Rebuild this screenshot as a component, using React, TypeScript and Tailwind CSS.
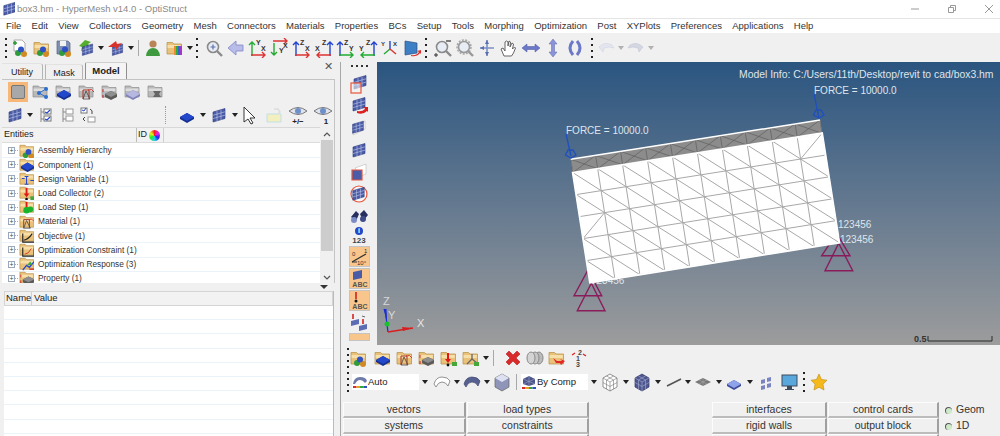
import type { ReactNode } from "react";

const FONT = "font-['Liberation_Sans',Arial,sans-serif]";

function Ic({ children, w = 20, h = 20 }: { children: ReactNode; w?: number; h?: number }) {
  return (
    <svg viewBox={`0 0 ${w} ${h}`} width={w} height={h} className="shrink-0 block">
      {children}
    </svg>
  );
}

function Caret() {
  return (
    <svg viewBox="0 0 6 4" width="6" height="4" className="shrink-0 block">
      <path d="M0 0h6L3 4z" fill="#222" />
    </svg>
  );
}

function Grip({ n = 4 }: { n?: number }) {
  return (
    <div className="flex flex-col gap-[4px] shrink-0 mx-[1px]">
      {Array.from({ length: n }).map((_, i) => (
        <span key={i} className="block w-[2px] h-[2px] bg-[#222]" />
      ))}
    </div>
  );
}

function Sep() {
  return <div className="w-px h-[16px] bg-[#a8a8a8] mx-[2px] shrink-0" />;
}

// --- drawing parts ---
const Folder = () => (
  <>
    <path d="M2 4.5h5.5l1.5 1.5h7.5v10H2z" fill="#e9c178" stroke="#b58d45" strokeWidth=".7" />
    <path d="M2.6 7h13.2v3H2.6z" fill="#f6dfa9" />
  </>
);
const GreyFolder = () => (
  <>
    <path d="M2 4h5.5L9 5.5h7V15H2z" fill="#b9b9b9" stroke="#8e8e8e" strokeWidth=".7" />
    <path d="M2.6 6.5h12.8v2.5H2.6z" fill="#dcdcdc" />
  </>
);
const Flag = () => (
  <g>
    <path d="M4 7l12-3.5v10L4 17z" fill="#4a5ba8" stroke="#2d3a7c" strokeWidth=".6" />
    <path d="M8 6v10M12 5v10M4 10.3l12-3.5M4 13.6l12-3.5" stroke="#c5cdea" strokeWidth=".6" />
  </g>
);
const Balls = () => (
  <>
    <circle cx="8" cy="15" r="3" fill="#2f9c3c" />
    <circle cx="14" cy="16" r="3" fill="#d18a22" />
    <circle cx="11" cy="11.5" r="3" fill="#2e52c4" />
  </>
);
const Slab = ({ c = "#2448cc", d = "#16308f" }: { c?: string; d?: string }) => (
  <>
    <path d="M3 12l7-4 7 4v2l-7 4-7-4z" fill={d} />
    <path d="M3 12l7-4 7 4-7 4z" fill={c} />
  </>
);
const Material = () => (
  <>
    <path d="M6 17V8h6v9" fill="none" stroke="#a5322a" strokeWidth="1" />
    <path d="M9 9l-3 8h7z" fill="none" stroke="#444" strokeWidth=".8" />
    <path d="M11 8q4-2 6 2" fill="none" stroke="#d23b2d" strokeWidth="1" />
  </>
);
const Prop = () => (
  <>
    <path d="M5 12l6-3 6 3v3l-6 3-6-3z" fill="#5b5b5b" />
    <path d="M5 12l6-3 6 3-6 3z" fill="#8e8e8e" />
    <path d="M3 7v3M3 13v3" stroke="#c22" strokeWidth="1" />
  </>
);
const Load = () => (
  <>
    <path d="M9 5v8" stroke="#e01818" strokeWidth="2" />
    <path d="M6 11h6l-3 4z" fill="#e01818" />
    <circle cx="9" cy="17" r="1.4" fill="#111" />
    <rect x="13" y="14" width="5" height="4" fill="#46a63a" />
  </>
);
const Rainbow = ({ y }: { y: number }) => (
  <>
    <rect x="1" y={y} width="3.5" height="2" fill="#d92b2b" />
    <rect x="4.5" y={y} width="3.5" height="2" fill="#e6a31f" />
    <rect x="8" y={y} width="3.5" height="2" fill="#2fa83a" />
    <rect x="11.5" y={y} width="3.5" height="2" fill="#2e52c4" />
  </>
);
const Axis = ({ v, h, lv, lh, down, rev }: { v: string; h: string; lv: string; lh: string; down?: boolean; rev?: boolean }) => {
  const vx = rev ? 16 : 4;
  const vPath = down ? `M${vx} 5v12M${vx - 3} 14l3 3 3-3` : `M${vx} 18V4M${vx - 3} 7l3-3 3 3`;
  const hy = down ? 3 : 17;
  const hPath = rev ? `M17 ${hy}H3M6 ${hy - 3}l-3 3 3 3` : `M3 ${hy}H17M14 ${hy - 3}l3 3-3 3`;
  return (
    <>
      <path d={vPath} stroke={v} strokeWidth="1.4" fill="none" />
      <path d={hPath} stroke={h} strokeWidth="1.4" fill="none" />
      <text x="8" y="7" fontSize="7" fontWeight="700" fill="#333" className={FONT}>
        {down ? "" : lv}
      </text>
      <text x={rev ? 1 : 13} y={down ? 10 : 13} fontSize="7" fontWeight="700" fill="#333" className={FONT}>
        {lh}
      </text>
      {down && (
        <text x="9" y="15" fontSize="7" fontWeight="700" fill="#333" className={FONT}>
          {lv}
        </text>
      )}
    </>
  );
};
const Magnifier = ({ c = "#8a8a8a" }: { c?: string }) => (
  <>
    <circle cx="9" cy="9" r="5.5" fill="#e8ecf5" stroke={c} strokeWidth="1.6" />
    <path d="M13 13l5 5" stroke={c} strokeWidth="2.4" />
  </>
);

// --- top toolbar ---
function TopToolbar() {
  return (
    <div className="flex items-center h-[29px] bg-[#f0f0f0] pl-[4px] gap-[2px]">
      <Grip />
      <Ic><path d="M4 2h8l3 3v8H4z" fill="#fff" stroke="#999" strokeWidth=".8" /><path d="M3 5h4M5 3v4" stroke="#2a9a3a" strokeWidth="1.6" /><Balls /></Ic>
      <Ic><Folder /><Balls /></Ic>
      <Ic><path d="M3 3h11l2 2v11H3z" fill="#7f8fb4" stroke="#55617f" strokeWidth=".7" /><path d="M6 3h6v5H6z" fill="#f2f2f2" /><Balls /></Ic>
      <Ic><path d="M9 2l-6 6 3 1-1 4 9-5-2-2 3-2z" fill="#55ad2c" /><g transform="translate(3 3) scale(.85)"><Flag /></g></Ic>
      <Caret />
      <Ic><g transform="translate(3 3) scale(.85)"><Flag /></g><path d="M2 9l8-6 1 3 5-1-6 7-1-3z" fill="#d8322a" /></Ic>
      <Caret />
      <Sep />
      <Ic><circle cx="10" cy="6" r="3.6" fill="#b98457" /><path d="M3 18q1-8 7-8t7 8z" fill="#3f9a3f" /></Ic>
      <Ic><Folder /><path d="M9 8h2v9H9z" fill="#e83" /><path d="M11 8h2v9h-2z" fill="#3a3" /><path d="M13 8h2v9h-2z" fill="#36c" /><path d="M15 8h2v9h-2z" fill="#a3c" /></Ic>
      <Caret />
      <Grip />
      <div className="w-[1px]" />
      <Ic><Magnifier /><path d="M6.5 9h5M9 6.5v5" stroke="#5a6fb0" strokeWidth="1.2" /></Ic>
      <Ic><path d="M2 10l8-7v4h7v6h-7v4z" fill="#b7bce8" stroke="#8088c4" strokeWidth=".8" /></Ic>
      <Ic><Axis v="#22aa33" h="#dd3333" lv="Y" lh="X" /></Ic>
      <Ic><Axis v="#22aa33" h="#dd3333" lv="Y" lh="X" down /></Ic>
      <Ic><Axis v="#2244cc" h="#dd3333" lv="Z" lh="X" /></Ic>
      <Ic><Axis v="#2244cc" h="#dd3333" lv="Z" lh="X" rev /></Ic>
      <Ic><Axis v="#2244cc" h="#22aa33" lv="Z" lh="Y" /></Ic>
      <Ic><Axis v="#2244cc" h="#22aa33" lv="Z" lh="Y" rev /></Ic>
      <Ic>
        <path d="M10 11V3" stroke="#2244cc" strokeWidth="1.4" />
        <path d="M10 11l-6 5" stroke="#22aa33" strokeWidth="1.4" />
        <path d="M10 11l6 5" stroke="#dd3333" strokeWidth="1.4" />
        <text x="1" y="8" fontSize="6" fontWeight="700" fill="#333" className={FONT}>Y</text>
        <text x="13" y="8" fontSize="6" fontWeight="700" fill="#333" className={FONT}>X</text>
      </Ic>
      <Ic><path d="M3 3l12 2v10l-12 2z" fill="#3d7fc4" stroke="#2b4f85" strokeWidth=".7" /><path d="M9 17q5 1 8-3l-2-1 4-1v4l-1-1q-3 4-9 3z" fill="#d8322a" /></Ic>
      <Grip />
      <div className="w-[1px]" />
      <Ic><Magnifier /><path d="M13 3h5" stroke="#333" strokeWidth="1.2" /><path d="M1 17h4M3 15v4" stroke="#333" strokeWidth="1" /></Ic>
      <Ic><circle cx="9" cy="9" r="7" fill="none" stroke="#aaa" strokeWidth="1.6" strokeDasharray="2 1.4" /><Magnifier c="#999" /></Ic>
      <Ic><path d="M10 2v16M3 10h14" stroke="#7d8fc4" strokeWidth="1.6" /><path d="M10 2l-2 4h4zM10 18l-2-4h4zM3 10l4-2v4z" fill="#5a6fb0" /></Ic>
      <Ic><path d="M5 18l-3-7 2-1 2 3V4l1.5-1L9 4v4l1-5 1.5 1-.5 5 2-4 1.5 1-1 5 2-2 1 1-2 5-2 3z" fill="#fff" stroke="#555" strokeWidth=".9" /></Ic>
      <Ic><path d="M1 10l5-4v2.5h8V6l5 4-5 4v-2.5H6V14z" fill="#6c78c8" stroke="#4a55a0" strokeWidth=".5" /></Ic>
      <Ic><path d="M10 1l4 5h-2.5v8H14l-4 5-4-5h2.5V6H6z" fill="#8a94d6" stroke="#5f68ac" strokeWidth=".5" /></Ic>
      <Ic><path d="M8 3Q2 10 8 17M12 3q6 7 0 14" fill="none" stroke="#6c78c8" strokeWidth="3" /></Ic>
      <div className="w-[1px]" />
      <Grip />
      <Ic><path d="M3 9q6-6 13-2l2 3-5-1-5 1-1 4z" fill="#e3e6ef" stroke="#d0d4e0" strokeWidth=".6" /></Ic>
      <div className="opacity-30"><Caret /></div>
      <Ic><path d="M17 9Q11 3 4 7l-2 3 5-1 5 1 1 4z" fill="#d4d7e2" stroke="#c4c8d6" strokeWidth=".6" /></Ic>
      <div className="opacity-30"><Caret /></div>
    </div>
  );
}

// --- model browser ---
function TreeIcon({ kind }: { kind: string }) {
  return (
    <Ic h={14} w={15}>
      <g transform="translate(-1 -3) scale(.95)">
        <Folder />
        {kind === "asm" && <Balls />}
        {kind === "comp" && <Slab />}
        {kind === "dv" && <path d="M4 10h3M9 8v8M7 8h4M7 16h4M13 12h5" stroke="#2448cc" strokeWidth="1.1" fill="none" />}
        {kind === "lc" && <Load />}
        {kind === "ls" && (
          <>
            <path d="M9 5v7" stroke="#e01818" strokeWidth="2" />
            <circle cx="9" cy="14" r="3.4" fill="#18b52c" />
            <circle cx="13" cy="13" r="3" fill="#18b52c" />
          </>
        )}
        {kind === "mat" && <Material />}
        {kind === "obj" && <path d="M5 8v9h12M6 15q5-1 9-7" fill="none" stroke="#222" strokeWidth="1.2" />}
        {kind === "con" && <><path d="M5 8v9h12V9" fill="none" stroke="#222" strokeWidth="1.2" /><path d="M7 15q4 0 7-6" fill="none" stroke="#d23b2d" /></>}
        {kind === "resp" && <><path d="M5 17l4-5 3 2 5-6" fill="none" stroke="#2448cc" strokeWidth="1.4" /><path d="M9 12l4-4 2 3z" fill="#3fa83c" /><path d="M12 16h6" stroke="#d23b2d" strokeWidth="1.6" /></>}
        {kind === "prop" && <Prop />}
      </g>
    </Ic>
  );
}

const entities = [
  ["asm", "Assembly Hierarchy"],
  ["comp", "Component (1)"],
  ["dv", "Design Variable (1)"],
  ["lc", "Load Collector (2)"],
  ["ls", "Load Step (1)"],
  ["mat", "Material (1)"],
  ["obj", "Objective (1)"],
  ["con", "Optimization Constraint (1)"],
  ["resp", "Optimization Response (3)"],
  ["prop", "Property (1)"],
];

function Eye({ label, right }: { label: string; right?: boolean }) {
  return (
    <div className="flex flex-col items-center w-[22px] shrink-0">
      <Ic w={20} h={13}><path d="M1 6q9-7 18 0-9 7-18 0z" fill="#dfe3ee" stroke="#777" /><circle cx="10" cy="6" r="3" fill="#6f8fc8" /></Ic>
      <span className={`text-[8px] font-bold leading-[7px] ${right ? "pl-[6px]" : ""}`}>{label}</span>
    </div>
  );
}

function LeftPanel() {
  return (
    <div className="w-[341px] shrink-0 h-full flex flex-col border-r border-[#a8a8a8] text-[#222]">
      <div className="flex items-end h-[17px] pl-[2px] pr-[6px] text-[9px] relative">
        <div className="w-[41px] h-[16px] pt-[3px] flex items-center justify-center border-r border-t border-t-[#e2e2e2] border-r-[#b4b4b4] rounded-tr-[3px]">Utility</div>
        <div className="ml-[2px] w-[38px] h-[15px] pt-[3px] flex items-center justify-center border-x border-t border-t-[#e2e2e2] border-x-[#b4b4b4] rounded-tr-[3px]">Mask</div>
        <div className="ml-[2px] w-[42px] h-[17px] pt-[1px] text-[9.5px] flex items-center justify-center border-x border-t border-t-[#d0d0d0] border-x-[#909090] rounded-t-[2px] bg-[#f4f4f4] font-bold">Model</div>
        <span className="absolute right-[7px] top-[-4px] text-[11px] text-[#555]">✕</span>
      </div>

      <div className="ml-[2px] mr-[5px] border-t border-r border-[#c4c4c4] flex flex-col h-[204px]">
        <div className="flex items-center gap-[3px] h-[24px] pl-[6px]">
          <div className="w-[20px] h-[20px] bg-[#f7b877] flex items-center justify-center shrink-0">
            <div className="w-[14px] h-[14px] rounded-[2px] bg-[#a8a8a8] border border-[#777]" />
          </div>
          <Ic><GreyFolder /><circle cx="8" cy="11" r="2" fill="#2d6fcf" /><circle cx="15" cy="7" r="2" fill="#2d6fcf" /><circle cx="15" cy="15" r="2" fill="#2d6fcf" /><path d="M8 11l7-4M8 11l7 4" stroke="#2d6fcf" /></Ic>
          <Ic><GreyFolder /><Slab /></Ic>
          <Ic><GreyFolder /><Material /></Ic>
          <Ic><GreyFolder /><Prop /></Ic>
          <Ic><GreyFolder /><Slab c="#b6b8e0" d="#7f82b8" /></Ic>
          <Ic><GreyFolder /><path d="M7 9h8l-2 3 2 3H7l2-3z" fill="#666" /></Ic>
        </div>
        <div className="flex items-center h-[22px] pl-[3px]">
          <Ic><Flag /></Ic>
          <div className="mx-[2px]"><Caret /></div>
          <Ic><path d="M6 3v14M6 7h3M6 14h3" stroke="#888" fill="none" /><rect x="9" y="4" width="7" height="5" fill="#fff" stroke="#777" /><rect x="9" y="11" width="7" height="5" fill="#fff" stroke="#777" /><path d="M10 7l2 1 3-3M10 14l2 1 3-3" stroke="#2448cc" fill="none" strokeWidth="1.2" /></Ic>
          <div className="w-[2px]" />
          <Ic><path d="M6 3v14M6 7h3M6 14h3" stroke="#888" fill="none" /><rect x="9" y="4" width="7" height="5" fill="#fff" stroke="#999" /><rect x="9" y="11" width="7" height="5" fill="#fff" stroke="#999" /></Ic>
          <div className="w-[2px]" />
          <Ic><rect x="3" y="3" width="6" height="5" fill="#fff" stroke="#777" /><path d="M4 5l2 1 2-3" stroke="#2448cc" fill="none" /><rect x="10" y="12" width="7" height="5" fill="#fff" stroke="#999" /><path d="M12 4q3 1 2 5M7 12l-2 2 2 2" stroke="#444" fill="none" /></Ic>
          <div className="w-[68px] h-[18px] flex justify-end shrink-0"><div className="h-[18px] border-l border-dotted border-[#999]" /></div>
          <div className="flex items-center gap-[3px] ml-[11px]">
            <Ic><Slab /></Ic>
            <Caret />
            <Ic><Flag /></Ic>
            <Caret />
            <div className="-ml-[2px]"><Ic><path d="M5 2v15l4-3 3 5 2-1-3-5h5z" fill="#fff" stroke="#222" strokeWidth=".9" /></Ic></div>
            <div className="ml-[2px]"><Ic><path d="M3 9h14v8H3z" fill="#f4efbf" stroke="#bfe0e8" /><path d="M10 4h4l2 3-2 2" fill="none" stroke="#ddd" strokeWidth="1.5" /></Ic></div>
            <Eye label="+/−" />
            <Eye label="1" right />
          </div>
        </div>

        <div className="flex flex-1 min-h-0 mt-[1px]">
          <div className="w-[318px] flex flex-col border-t border-[#d8d8d8]">
            <div className="flex items-center h-[15px] bg-[#f2f2f2] border-b border-[#dcdcdc] text-[9px] shrink-0">
              <div className="w-[135px] pl-[2px] border-r border-[#bdbdbd] h-full flex items-center">Entities</div>
              <div className="w-[12px] pl-[1px]">ID</div>
              <div className="w-[15px] h-full border-r border-[#cfcfcf] flex items-center">
                <span className="block w-[11px] h-[11px] rounded-full bg-[conic-gradient(#e22,#e2e,#22e,#2ce,#2e2,#ee2,#e22)]" />
              </div>
            </div>
            <div className="flex-1 bg-white overflow-hidden pt-[1px]">
              {entities.map(([kind, label]) => (
                <div key={label} className="flex items-center h-[14.2px] border-b border-[#eaf2fa] pl-[6px] text-[8.3px] text-[#333]">
                  <span className="w-[7px] h-[7px] border border-[#9aa7bd] flex items-center justify-center text-[7px] leading-none text-[#445] shrink-0">+</span>
                  <span className="w-[3px] border-t border-dotted border-[#aaa] mr-[1px]" />
                  <TreeIcon kind={kind} />
                  <span className="ml-[4px] whitespace-nowrap">{label}</span>
                </div>
              ))}
            </div>
          </div>
          <div className="w-[14px] flex flex-col items-center bg-[#f0f0f0] shrink-0">
            <svg viewBox="0 0 10 6" width="10" height="6" className="mt-[4px] mb-[2px] block"><path d="M2 5l3-3 3 3" fill="none" stroke="#555" strokeWidth="1.2" /></svg>
            <div className="w-[12px] h-[111px] bg-[#cdcdcd] mt-[1px]" />
            <svg viewBox="0 0 10 6" width="10" height="6" className="mt-auto mb-[2px] block"><path d="M2 1l3 3 3-3" fill="none" stroke="#555" strokeWidth="1.2" /></svg>
          </div>
        </div>
      </div>

      <div className="flex justify-end pr-[12px] h-[8px] items-center shrink-0">
        <svg viewBox="0 0 8 4" width="8" height="4" className="block"><path d="M0 0h8L4 4z" fill="#333" /></svg>
      </div>

      <div className="ml-[4px] mr-[6px] flex-1 flex flex-col min-h-0 border-r border-[#bbb]">
        <div className="flex h-[15px] bg-[#f2f2f2] border border-[#d4d4d4] text-[9.5px] items-center shrink-0">
          <div className="w-[27px] pl-[1px] border-r border-[#cfcfcf] h-full flex items-center">Name</div>
          <div className="pl-[2px]">Value</div>
        </div>
        <div className="flex-1 bg-white flex flex-col">
          {Array.from({ length: 10 }).map((_, i) => (
            <div key={i} className="h-[14.2px] border-b border-[#eaf2fa]" />
          ))}
        </div>
      </div>
    </div>
  );
}

// --- vertical toolbar next to the viewport ---
function SideToolbar() {
  return (
    <div className="w-[36px] shrink-0 flex flex-col items-center overflow-hidden pt-[3px]">
      <div className="flex gap-[3px] mb-[7px]">
        {[0, 1, 2, 3].map((i) => <span key={i} className="block w-[2px] h-[2px] bg-[#333]" />)}
      </div>
      <div className="flex flex-col items-center gap-[1px]">
        <div className="h-[21px]"><Ic><g transform="translate(1 -2)"><Flag /></g><rect x="2" y="9" width="10" height="10" fill="#f4f4f4" fillOpacity=".6" stroke="#e8553a" strokeWidth="1.2" /></Ic></div>
        <div className="h-[21px]"><Ic><g transform="translate(0 -2)"><Flag /></g><path d="M8 15q5 1 8-2l-1-2 4 0v5l-1-1q-4 4-10 2z" fill="#dc1f1f" /></Ic></div>
        <div className="h-[21px]"><Ic><path d="M4 9l12-6v8L4 17z" fill="#fff" stroke="#bbb" strokeWidth=".6" /><g transform="scale(.9)"><Flag /></g></Ic></div>
        <div className="h-[21px]"><Ic><Flag /></Ic></div>
        <div className="h-[21px]"><Ic><path d="M6 6l11-4v10l-5 2z" fill="#fff" stroke="#bbb" strokeWidth=".6" /><path d="M3 8h10v10H3z" fill="#4a5ba8" /><path d="M3 8h10v10H3z" fill="none" stroke="#e8553a" strokeWidth="1.2" /></Ic></div>
        <div className="h-[21px]"><Ic><circle cx="10" cy="10" r="8" fill="#f7f7f7" stroke="#e8553a" strokeWidth="1.2" /><g transform="scale(.95)"><Flag /></g></Ic></div>
        <div className="h-[21px]"><Ic><path d="M2 11l5-6 3 3-3 7zM11 8l4-4 4 5-5 6z" fill="#27305f" /><circle cx="5" cy="14" r="3" fill="#7d8cc4" /><circle cx="14" cy="13" r="3" fill="#3e4c8a" /></Ic></div>
        <div className="flex flex-col items-center mt-[-1px] mb-[-1px]">
          <span className="w-[8px] h-[8px] rounded-full bg-[#2348c8] text-white text-[7px] leading-[8px] text-center font-bold">i</span>
          <span className="text-[8px] leading-[11px] font-bold text-[#444]">123</span>
        </div>
        <div className="w-[21px] h-[21px] bg-[#f8c68c] border border-[#c4c4c4] shrink-0 overflow-hidden">
          <Ic><path d="M2 15L16 7" stroke="#333" strokeWidth="1.3" /><path d="M2 15h5" stroke="#333" /><text x="2" y="9" fontSize="6" fill="#333" className={FONT}>0</text><text x="14" y="6" fontSize="6" fill="#333" className={FONT}>1</text><text x="7" y="18" fontSize="6" fill="#333" className={FONT}>10°</text></Ic>
        </div>
        <div className="w-[21px] h-[21px] bg-[#f8c68c] border border-[#c4c4c4] shrink-0 flex flex-col overflow-hidden">
          <Ic w={20} h={12}><path d="M3 3l9-2v8l-9 2z" fill="#4a5ba8" /></Ic>
          <span className="text-[7px] leading-[7px] font-bold text-[#555] text-right pr-[1px]">ABC</span>
        </div>
        <div className="w-[21px] h-[21px] bg-[#f8c68c] border border-[#c4c4c4] shrink-0 flex flex-col overflow-hidden">
          <Ic w={20} h={12}><path d="M6 1v7" stroke="#d01616" strokeWidth="1.5" /><circle cx="6" cy="10" r="1.5" fill="#111" /></Ic>
          <span className="text-[7px] leading-[7px] font-bold text-[#555] text-right pr-[1px]">ABC</span>
        </div>
        <div className="h-[20px]"><Ic><path d="M2 9l8-2v5l-8 2zM10 14l8-2v5l-8 2z" fill="#5d6db4" /><path d="M4 2v5M14 7v5" stroke="#d01616" strokeWidth="1.5" /><path d="M13 4l3 1" stroke="#666" /></Ic></div>
        <div className="w-[21px] h-[8px] bg-[#f8c68c] border border-[#c4c4c4] shrink-0" />
      </div>
    </div>
  );
}

// --- the graphics area ---
const TL = [570.7, 159.3];
const TR = [820, 120];
const BR = [839.3, 242.7];
const BL = [590, 282.7];

function pt(u: number, v: number): [number, number] {
  const x = TL[0] * (1 - u) * (1 - v) + TR[0] * u * (1 - v) + BR[0] * u * v + BL[0] * (1 - u) * v;
  const y = TL[1] * (1 - u) * (1 - v) + TR[1] * u * (1 - v) + BR[1] * u * v + BL[1] * (1 - u) * v;
  return [x, y];
}
const BAND = 0.108;
const rowsV = [BAND, 0.286, 0.464, 0.643, 0.821, 1];

function seg(u1: number, v1: number, u2: number, v2: number) {
  const [a, b] = pt(u1, v1);
  const [c, d] = pt(u2, v2);
  return `M${a.toFixed(1)} ${b.toFixed(1)}L${c.toFixed(1)} ${d.toFixed(1)}`;
}

function buildMesh() {
  let body = "";
  let band = "";
  for (let i = 0; i <= 10; i++) {
    body += seg(i / 10, BAND, i / 10, 1);
    band += seg(i / 10, 0, i / 10, BAND);
  }
  rowsV.forEach((v) => (body += seg(0, v, 1, v)));
  for (let j = 0; j < 5; j++) {
    for (let i = 0; i < 10; i++) {
      const flip = (i === 9 && j === 0) || (i === 0 && j === 2);
      body += flip
        ? seg((i + 1) / 10, rowsV[j], i / 10, rowsV[j + 1])
        : seg(i / 10, rowsV[j], (i + 1) / 10, rowsV[j + 1]);
    }
  }
  for (let i = 0; i < 10; i++) {
    band += seg(i / 10, 0, (i + 1) / 10, BAND);
    band += seg(i / 10, BAND, (i + 1) / 10, 0);
  }
  return { body, band };
}

const poly = (pts: number[][]) => pts.map((p) => p.join(",")).join(" ");

function Viewport() {
  const { body, band } = buildMesh();
  const labelClass = `${FONT} text-[10px] fill-[#dfe5ec]`;
  const outline = poly([TL, TR, BR, BL]);
  const bandPoly = poly([pt(0, 0), pt(1, 0), pt(1, BAND), pt(0, BAND)]);
  return (
    <div className="flex-1 h-full bg-linear-to-b from-[#2a5580] to-[#9c9c9c] overflow-hidden">
      <svg viewBox="377 62 623 283" width="623" height="283" className="block">
        <text x="739" y="78" className={`${FONT} text-[10.4px] fill-[#dfe5ec]`}>Model Info: C:/Users/11th/Desktop/revit to cad/box3.hm</text>
        <text x="814" y="94" className={labelClass}>FORCE = 10000.0</text>
        <text x="566" y="134" className={labelClass}>FORCE = 10000.0</text>
        <text x="838" y="228" className={labelClass}>123456</text>
        <text x="840" y="243" className={labelClass}>123456</text>
        <text x="591" y="284" className={labelClass}>123456</text>

        <g fill="none" stroke="#8a1c5c" strokeWidth="1.4">
          <polygon points="574,295.7 601.7,295.7 588,270" />
          <polygon points="577.3,310.7 605,310.7 591.3,283.3" />
          <polygon points="821.7,255.7 850,255.7 836.7,233.3" />
          <polygon points="825,270.7 852.7,270.7 838.7,243.3" />
        </g>

        <polygon points={outline} fill="#fff" />
        <path d={body} stroke="#a8a8a8" strokeWidth="1" fill="none" />
        <polygon points={bandPoly} fill="#8c8c8c" />
        <path d={band} stroke="#5e5e5e" strokeWidth=".7" fill="none" />
        <polygon points={poly([pt(0, BAND), pt(1, BAND), BR, BL])} fill="none" stroke="#fff" strokeWidth="2" />
        <path d={seg(0, 0, 1, 0)} stroke="#fff" strokeWidth="1.5" />

        <g stroke="#1f4fc0" fill="none" strokeWidth="1.3">
          <path d="M566 134l5 22M568 150l-2.5 5 5.5 3 5-3-3-5z" />
          <path d="M814 94l5 24M816 110l-2.5 5 5.5 3 5-3-3-5z" />
        </g>

        <text x="383" y="305" className={`${FONT} text-[11px] fill-[#d8d8d8]`}>Z</text>
        <text x="388" y="319" className={`${FONT} text-[11px] fill-[#d8d8d8]`}>Y</text>
        <text x="417" y="327" className={`${FONT} text-[11px] fill-[#e6e6e6]`}>X</text>
        <path d="M388 332l-3-23" stroke="#1a2ed6" strokeWidth="1.3" />
        <path d="M387 322l-3.5-13h3z" fill="#1a2ed6" />
        <path d="M388 332l25-4" stroke="#d81f1f" strokeWidth="1.3" />
        <path d="M402 327l11 1-10 3z" fill="#d81f1f" />
        <circle cx="387" cy="324" r="2.5" fill="#18c22c" />

        <text x="914" y="342" className={`${FONT} text-[9px] font-bold fill-[#333]`}>0.5</text>
        <path d="M928 336v5h64v-5" fill="none" stroke="#2a2a2a" strokeWidth="1" />
      </svg>
    </div>
  );
}

// --- toolbars and buttons under the graphics area ---
function Combo({ label, children }: { label: string; children: ReactNode }) {
  return (
    <div className="w-[78px] h-[16px] bg-white flex items-center shrink-0 text-[9.5px] text-[#222]">
      <div className="w-[16px] h-[16px] shrink-0 overflow-hidden">{children}</div>
      <span className="flex-1 whitespace-nowrap">{label}</span>
      <div className="w-[11px] h-full bg-[#f0f0f0] flex items-center justify-center"><Caret /></div>
    </div>
  );
}

function PanelButton({ label }: { label: string }) {
  return (
    <div className="h-[16px] bg-[#f0f0f0] border-t border-l border-[#fcfcfc] border-r-2 border-b-2 border-r-[#a0a0a0] border-b-[#bcbcbc] flex items-center justify-center text-[10.5px] text-[#333] whitespace-nowrap">
      {label}
    </div>
  );
}

function Radio({ label }: { label: string }) {
  return (
    <div className="h-[16px] flex items-center gap-[3px] text-[10.5px] text-[#333]">
      <span className="block w-[7px] h-[7px] rounded-full bg-[#cdeac8] border-l border-t border-[#555]" />
      <span className="ml-[1px]">{label}</span>
    </div>
  );
}

function BottomPanel() {
  return (
    <div className="flex-1 flex flex-col min-h-0">
      <div className="flex items-center h-[26px] pl-[5px] gap-[2px] pt-[3px]">
        <Grip />
        <div className="-ml-[3px]"><Ic><Folder /><Balls /></Ic></div>
        <div className="ml-[2px]"><Ic><Folder /><Slab /></Ic></div>
        <Ic><Folder /><Material /></Ic>
        <Ic><Folder /><Prop /></Ic>
        <Ic><Folder /><Load /></Ic>
        <Ic><Folder /><path d="M11 11V6M11 11l-5 5M11 11l5 4" stroke="#666" strokeWidth="1.3" /><rect x="13" y="14" width="5" height="4" fill="#46a63a" /></Ic>
        <Caret />
        <Sep />
        <div className="w-[3px]" />
        <Ic><path d="M3 6l3-3 4 4 4-4 3 3-4 4 4 4-3 3-4-4-4 4-3-3 4-4z" fill="#d92b2b" stroke="#b81d1d" strokeWidth=".6" /></Ic>
        <Ic><ellipse cx="14" cy="10" rx="4" ry="6" fill="#bbb" stroke="#888" /><ellipse cx="10" cy="10" rx="4" ry="6" fill="#c6c6c6" stroke="#888" /><ellipse cx="6" cy="10" rx="4" ry="6" fill="#d4d4d4" stroke="#888" /></Ic>
        <Ic><Folder /><path d="M6 10l4 3h5l-2-2 5 2-4 4-1-2-4 0z" fill="#e32828" /></Ic>
        <Ic>
          <text x="9" y="7" fontSize="7" fontWeight="700" fill="#444" className={FONT}>2</text>
          <text x="7" y="13" fontSize="7" fontWeight="700" fill="#444" className={FONT}>1</text>
          <text x="7" y="19" fontSize="7" fontWeight="700" fill="#444" className={FONT}>3</text>
          <path d="M3 7l3-2M14 6l3 2" stroke="#d22" strokeWidth="1.3" />
        </Ic>
      </div>
      <div className="flex items-center h-[23px] mt-[4px] pl-[5px] gap-[2px]">
        <Grip />
        <Combo label="Auto">
          <Ic w={16} h={16}><path d="M1 10q1-7 7-7t7 4l-2 2q-2-3-5-3T3 10z" fill="#6e7aa8" /><Rainbow y={12} /></Ic>
        </Combo>
        <Ic><path d="M2 12q2-7 8-7t8 4l-2 5q-2-4-6-4t-6 5z" fill="#fff" stroke="#888" strokeWidth=".9" /></Ic>
        <Caret />
        <Ic><path d="M2 12q2-7 8-7t8 4l-2 5q-2-4-6-4t-6 5z" fill="#57618f" stroke="#3d4570" strokeWidth=".7" /></Ic>
        <Caret />
        <Ic><path d="M3 6l7-4 7 4v9l-7 4-7-4z" fill="#8e95b8" stroke="#666" strokeWidth=".7" /><path d="M3 6l7 4 7-4-7-4z" fill="#dde0f0" /></Ic>
        <Sep />
        <Combo label="By Comp">
          <Ic w={16} h={16}><path d="M2 5l6-3 6 3v5l-6 2-6-2z" fill="#4d5689" /><path d="M8 2v10M2 5l12 5M14 5L2 10" stroke="#a9b0d4" strokeWidth=".5" /><Rainbow y={13} /></Ic>
        </Combo>
        <div className="flex items-center gap-[3px] -ml-[1px]">
          <Ic><path d="M3 6l7-4 7 4v9l-7 4-7-4z" fill="#fff" stroke="#666" strokeWidth=".7" /><path d="M3 6l7 4 7-4M10 10v9M6.5 4l7 4v9M13.5 4l-7 4v9M3 10.5l7 4 7-4" fill="none" stroke="#777" strokeWidth=".6" /></Ic>
          <Caret />
          <Ic><path d="M3 6l7-4 7 4v9l-7 4-7-4z" fill="#4e5790" stroke="#333a66" strokeWidth=".7" /><path d="M3 6l7 4 7-4M10 10v9M6.5 4l7 4v9M13.5 4l-7 4v9M3 10.5l7 4 7-4" fill="none" stroke="#a6acd0" strokeWidth=".6" /></Ic>
          <Caret />
          <Ic><path d="M3 14L17 7" stroke="#555" strokeWidth="1.6" /></Ic>
          <div className="-ml-[2px]"><Caret /></div>
          <div className="-ml-[1px]"><Ic><path d="M2 10l8-4 8 4-8 4z" fill="#777" /><path d="M6 8l8 4M14 8l-8 4M10 6v8" stroke="#aaa" strokeWidth=".6" /></Ic></div>
          <Caret />
          <div className="-ml-[1px]"><Ic><Slab c="#8fa3ea" d="#3e4e9a" /></Ic></div>
          <Caret />
          <Ic><path d="M5 8l4-1v4l-4 1zM11 6l4-1v4l-4 1zM5 14l4-1v4l-4 1zM11 12l4-1v4l-4 1z" fill="#7a84c0" /></Ic>
          <Ic><rect x="3" y="3" width="15" height="11" fill="#5aa7dc" stroke="#3c4a5e" strokeWidth="1" /><path d="M8 14h5v3H8zM6 17h9v1H6z" fill="#3c4a5e" /></Ic>
          <Grip />
          <Ic><path d="M10 2l2.5 5.5 5.5.7-4 4 1 5.8-5-2.8-5 2.8 1-5.8-4-4 5.5-.7z" fill="#f5b91c" stroke="#b98a14" strokeWidth=".6" /></Ic>
        </div>
      </div>

      <div className="flex pt-[10px] pl-[2px]">
        <div className="grid grid-cols-2 gap-x-[1px] w-[246px] shrink-0">
          {["vectors", "load types", "systems", "constraints", "", ""].map((l, i) => (
            <PanelButton key={i} label={l} />
          ))}
        </div>
        <div className="w-[123px] shrink-0" />
        <div className="grid grid-cols-[115px_111px] gap-x-[1px] w-[227px] shrink-0">
          {["interfaces", "control cards", "rigid walls", "output block", "", ""].map((l, i) => (
            <PanelButton key={i} label={l} />
          ))}
        </div>
        <div className="flex flex-col pl-[6px]">
          <Radio label="Geom" />
          <Radio label="1D" />
        </div>
      </div>
    </div>
  );
}

export default function App() {
  return (
    <div className={`w-[1000px] h-[436px] overflow-hidden bg-[#f0f0f0] flex flex-col ${FONT}`}>
      <div className="h-[19px] shrink-0 bg-white border-b border-[#e4e4e4] flex items-center pl-[2px] pr-[7px] text-[9.5px] text-[#8a8a8a]">
        <Ic w={13} h={14}><g transform="translate(-2 -3) scale(.95)"><Flag /></g></Ic>
        <span className="ml-[2px]">box3.hm - HyperMesh v14.0 - OptiStruct</span>
        <div className="ml-auto flex items-center gap-[29px]">
          <svg viewBox="0 0 8 8" width="8" height="8" className="block"><path d="M0 4h8" stroke="#999" /></svg>
          <svg viewBox="0 0 8 8" width="8" height="8" className="block"><path d="M.5 2.5h5v5h-5zM2.5 2V.5h5v5H6" fill="none" stroke="#999" /></svg>
          <svg viewBox="0 0 8 8" width="8" height="8" className="block"><path d="M0 0l8 8M8 0L0 8" stroke="#999" /></svg>
        </div>
      </div>
      <div className="h-[14px] shrink-0 bg-white flex items-center pl-[6px] gap-[10.3px] text-[9.5px] text-[#333]">
        {["File", "Edit", "View", "Collectors", "Geometry", "Mesh", "Connectors", "Materials", "Properties", "BCs", "Setup", "Tools", "Morphing", "Optimization", "Post", "XYPlots", "Preferences", "Applications", "Help"].map((m) => (
          <span key={m}>{m}</span>
        ))}
      </div>
      <TopToolbar />
      <div className="flex flex-1 min-h-0">
        <LeftPanel />
        <div className="flex-1 flex flex-col min-w-0">
          <div className="flex h-[283px] shrink-0">
            <SideToolbar />
            <Viewport />
          </div>
          <BottomPanel />
        </div>
      </div>
    </div>
  );
}
